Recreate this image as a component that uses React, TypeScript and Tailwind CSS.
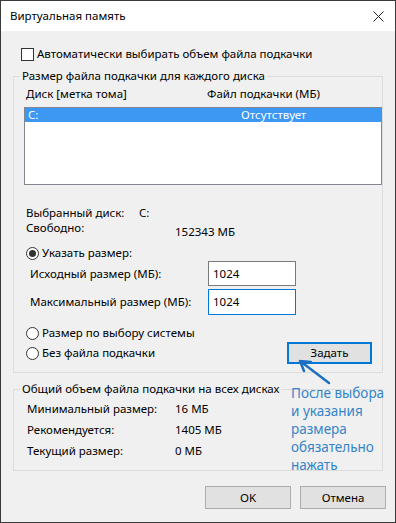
import React from "react";

function Radio({ checked }: { checked?: boolean }) {
  return (
    <span className="flex h-[13px] w-[13px] shrink-0 items-center justify-center rounded-full border border-[#333] bg-white">
      {checked && <span className="h-[7px] w-[7px] rounded-full bg-[#333]" />}
    </span>
  );
}

function GroupBox({
  title,
  className,
  children,
}: {
  title: string;
  className?: string;
  children: React.ReactNode;
}) {
  return (
    <fieldset className={"w-[370px] border border-[#dcdcdc] " + (className ?? "")}>
      <legend className="ml-[6px] px-[2px] leading-[16px]">{title}</legend>
      {children}
    </fieldset>
  );
}

export default function App() {
  return (
    <div className="relative flex h-[523px] w-[396px] flex-col border border-[#3a3a3a] text-[11.5px] leading-[16px] text-black [font-family:'Noto_Sans',sans-serif]">
      {/* title bar */}
      <div className="flex h-[30px] shrink-0 items-center justify-between bg-white pl-[9px] pr-[11px]">
        <span>Виртуальная память</span>
        <svg width="11" height="11" viewBox="0 0 11 11" className="text-[#222]">
          <path d="M0.5 0.5 L10.5 10.5 M10.5 0.5 L0.5 10.5" stroke="currentColor" strokeWidth="1" />
        </svg>
      </div>

      <div className="flex flex-1 flex-col bg-[#f0f0f0] pl-[12px] pr-[9px]">
        <label className="ml-[8px] mt-[15px] flex items-center gap-[3px]">
          <span className="h-[13px] w-[13px] border border-[#333] bg-white" />
          <span>Автоматически выбирать объем файла подкачки</span>
        </label>

        <GroupBox title="Размер файла подкачки для каждого диска" className="mt-[6px] pb-[8px]">
          <div className="mt-[2px] flex pl-[12px]">
            <span className="w-[181px]">Диск [метка тома]</span>
            <span>Файл подкачки (МБ)</span>
          </div>

          <div className="ml-[10px] mt-[5px] h-[78px] w-[358px] border border-[#828790] bg-white">
            <div className="flex h-[14px] items-center bg-[#3c98f2] pl-[3px] leading-[14px] text-white">
              <span className="w-[213px]">C:</span>
              <span>Отсутствует</span>
            </div>
          </div>

          <div className="mt-[20px] flex h-[15px] pl-[12px] leading-[15px]">
            <span className="w-[113px]">Выбранный диск:</span>
            <span>C:</span>
          </div>
          <div className="flex h-[15px] pl-[12px] leading-[15px]">
            <span className="w-[149px]">Свободно:</span>
            <span className="mt-[4px]">152343 МБ</span>
          </div>

          <label className="mt-[10px] flex items-center gap-[3px] pl-[12px]">
            <Radio checked />
            <span>Указать размер:</span>
          </label>

          <div className="flex h-[25px] items-center pl-[16px]">
            <span className="w-[178px]">Исходный размер (МБ):</span>
            <div className="flex h-[25px] w-[88px] items-center border border-[#7a7a7a] bg-white pl-[4px]">1024</div>
          </div>
          <div className="mt-[3px] flex h-[26px] items-center pl-[16px]">
            <span className="w-[178px]">Максимальный размер (МБ):</span>
            <div className="flex h-[26px] w-[88px] items-center border border-[#0078d7] bg-white pl-[4px]">1024</div>
          </div>

          <label className="mt-[10px] flex items-center gap-[3px] pl-[12px]">
            <Radio />
            <span>Размер по выбору системы</span>
          </label>
          <div className="mt-[1px] flex h-[22px] items-center justify-between pl-[12px] pr-[10px]">
            <label className="flex items-center gap-[3px]">
              <Radio />
              <span>Без файла подкачки</span>
            </label>
            <button className="h-[22px] w-[85px] border-2 border-[#0078d7] bg-[#e1e1e1]">Задать</button>
          </div>
        </GroupBox>

        <GroupBox title="Общий объем файла подкачки на всех дисках" className="mt-[8px] pb-[9px]">
          {[
            ["Минимальный размер:", "16 МБ"],
            ["Рекомендуется:", "1405 МБ"],
            ["Текущий размер:", "0 МБ"],
          ].map(([label, value], i) => (
            <div key={label} className={"flex pl-[13px] leading-[21px] " + (i === 0 ? "mt-[1px]" : "")}>
              <span className="w-[148px]">{label}</span>
              <span>{value}</span>
            </div>
          ))}
        </GroupBox>

        <div className="mt-[15px] flex justify-end gap-[9px]">
          <button className="h-[23px] w-[86px] border border-[#adadad] bg-[#e1e1e1]">OK</button>
          <button className="h-[23px] w-[86px] border border-[#adadad] bg-[#e1e1e1]">Отмена</button>
        </div>
      </div>

      {/* annotation */}
      <svg className="absolute left-[294px] top-[354px]" width="40" height="32" viewBox="294 354 40 32">
        <path d="M328 382 L299 360 M299 360 L310 361 M299 360 L303 370" stroke="#1f6fc0" strokeWidth="2.5" fill="none" strokeLinecap="round" />
      </svg>
      <div className="absolute left-[290px] top-[383px] text-[13.5px] leading-[18px] text-[#3584c8]">
        <div>После выбора</div>
        <div>и указания</div>
        <div>размера</div>
        <div>обязательно</div>
        <div>нажать</div>
      </div>
    </div>
  );
}
